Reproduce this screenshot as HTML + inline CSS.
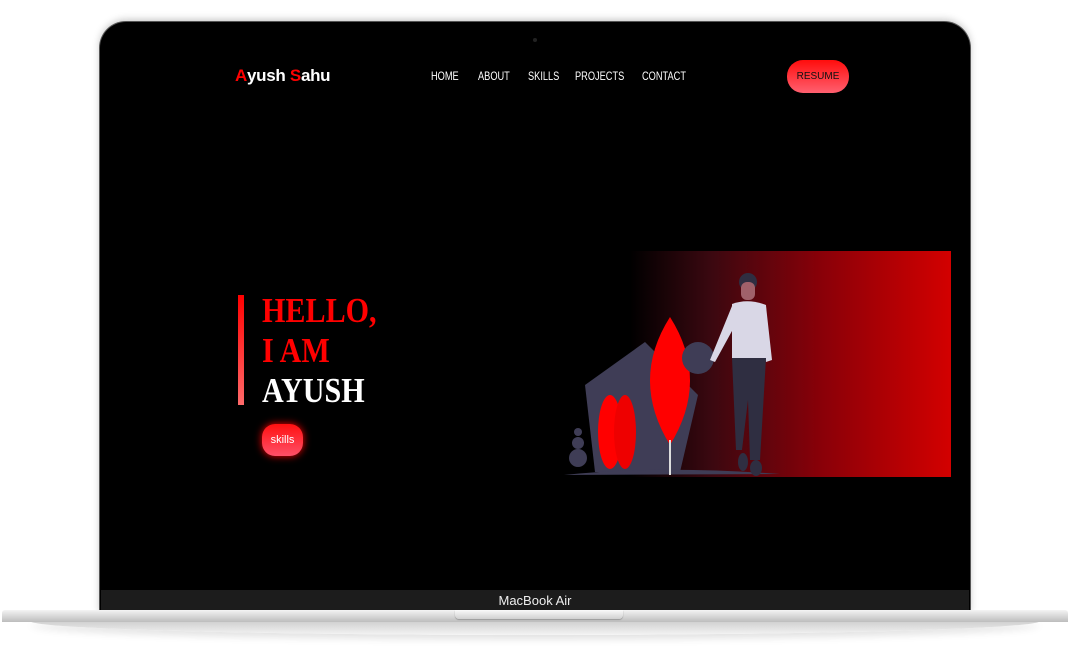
<!DOCTYPE html>
<html><head><style>
body{margin:0;width:1080px;height:650px;background:#fff;position:relative;overflow:hidden;font-family:"Liberation Sans",sans-serif}
.lid{position:absolute;left:100px;top:22px;width:870px;height:592px;background:#000;border-radius:26px 26px 0 0;box-shadow:0 0 0 1px #555,0 -2px 8px rgba(0,0,0,.25);}
.cam{position:absolute;left:533px;top:38px;width:4px;height:4px;border-radius:50%;background:#222}
.chin{position:absolute;left:101px;top:590px;width:868px;height:21px;background:#1c1c1c;color:#eee;font-size:13px;text-align:center;line-height:22px}
.base{position:absolute;left:2px;top:610px;width:1066px;height:12px;background:linear-gradient(#f4f4f4,#bdbdbd);border-radius:3px 3px 0 0}
.base2{position:absolute;left:30px;top:621px;width:1010px;height:14px;background:linear-gradient(#cfcfcf,#f4f4f4);border-radius:0 0 50% 50%/0 0 100% 100%;box-shadow:0 4px 8px rgba(0,0,0,.12)}
.notch{position:absolute;left:455px;top:610px;width:168px;height:9px;background:linear-gradient(#fafafa,#d0d0d0);border-radius:0 0 4px 4px;box-shadow:0 1px 1px #999}
.logo{position:absolute;left:235px;top:66px;font-weight:bold;font-size:17px;color:#fff;letter-spacing:-0.3px}
.logo b{color:#f00}
.nav{position:absolute;top:69px;font-size:12px;color:#fff;transform:scaleX(.77);transform-origin:left}
.resume{position:absolute;left:787px;top:60px;width:62px;height:33px;border-radius:16px;background:linear-gradient(#ff0d0d,#ff6070);color:#111;font-size:10px;text-align:center;line-height:33px}
.bar{position:absolute;left:238px;top:295px;width:6px;height:110px;background:linear-gradient(#f00,#ff6a6a)}
.h{position:absolute;left:262px;font-family:"Liberation Serif",serif;font-weight:bold;font-size:35px;line-height:40px;transform:scaleX(.86);transform-origin:left}
.skills{position:absolute;left:262px;top:424px;width:41px;height:32px;border-radius:13px;background:linear-gradient(#ff1010,#ff5068);color:#fff;font-size:11px;text-align:center;line-height:32px;box-shadow:0 0 8px #f00}
</style></head><body>
<div class="lid"></div><div class="cam"></div>
<div class="logo"><b>A</b>yush <b>S</b>ahu</div>
<div class="nav" style="left:431px">HOME</div>
<div class="nav" style="left:478px">ABOUT</div>
<div class="nav" style="left:528px">SKILLS</div>
<div class="nav" style="left:575px">PROJECTS</div>
<div class="nav" style="left:642px">CONTACT</div>
<div class="resume">RESUME</div>
<div class="bar"></div>
<div class="h" style="top:291px;color:#f00">HELLO,</div>
<div class="h" style="top:331px;color:#f00">I AM</div>
<div class="h" style="top:371px;color:#fff">AYUSH</div>
<div class="skills">skills</div>
<svg style="position:absolute;left:560px;top:250px" width="392" height="228">
<defs><linearGradient id="g" x1="0" x2="1"><stop offset="0" stop-color="#000"/><stop offset=".25" stop-color="#3a0810"/><stop offset=".6" stop-color="#8a0008"/><stop offset="1" stop-color="#d30000"/></linearGradient></defs>
<rect x="70" y="1" width="321" height="226" fill="url(#g)"/>
<polygon points="25,135 85,92 138,145 120,222 35,222" fill="#3f3d56"/>
<path d="M4,225 Q100,215 220,224 Z" fill="#3f3d56"/>
<circle cx="18" cy="208" r="9" fill="#3f3d56"/><circle cx="18" cy="193" r="6" fill="#3f3d56"/><circle cx="18" cy="182" r="4" fill="#3f3d56"/>
<ellipse cx="50" cy="182" rx="12" ry="37" fill="#f00"/><ellipse cx="65" cy="182" rx="11" ry="37" fill="#e00"/>
<path d="M110,67 Q150,130 110,195 Q70,130 110,67 Z" fill="#f00"/>
<rect x="109" y="190" width="2" height="35" fill="#ddd"/>
<circle cx="138" cy="108" r="16" fill="#3f3d56"/>
<circle cx="188" cy="32" r="9" fill="#2f2e41"/><rect x="181" y="32" width="14" height="18" rx="6" fill="#a0616a"/>
<path d="M172,54 Q188,48 206,55 L208,108 L172,108 Z" fill="#d9d7e6"/>
<path d="M172,56 L150,110 L155,112 L178,70 Z M206,56 L212,110 L206,112 L202,70 Z" fill="#d9d7e6"/>
<path d="M172,108 L206,108 L200,210 L190,210 L188,150 L182,200 L176,200 Z" fill="#2f2e41"/>
<ellipse cx="183" cy="212" rx="5" ry="9" fill="#2f2e41"/><ellipse cx="196" cy="218" rx="6" ry="8" fill="#2f2e41"/>
</svg>
<div class="chin">MacBook Air</div>
<div class="base2"></div><div class="base"></div><div class="notch"></div>
</body></html>
